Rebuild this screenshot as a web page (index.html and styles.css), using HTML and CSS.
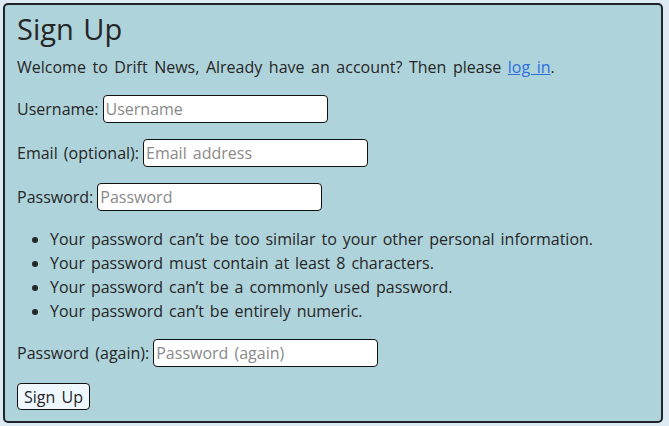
FILE: index.html
```html
<!DOCTYPE html>
<html lang="en">
<head>
<meta charset="utf-8">
<title>Sign Up</title>
<link rel="stylesheet" href="styles.css">
</head>
<body>
<main class="card">
  <h1 class="title">Sign Up</h1>
  <p class="intro">Welcome to Drift News, Already have an account? Then please <a href="#" class="link">log in</a>.</p>
  <form class="form">
    <p class="row"><label class="label" for="u">Username:</label> <input class="input" id="u" type="text" placeholder="Username"></p>
    <p class="row"><label class="label" for="e">Email (optional):</label> <input class="input" id="e" type="email" placeholder="Email address"></p>
    <p class="row"><label class="label" for="p1">Password:</label> <input class="input" id="p1" type="password" placeholder="Password"></p>
    <ul class="help">
      <li>Your password can’t be too similar to your other personal information.</li>
      <li>Your password must contain at least 8 characters.</li>
      <li>Your password can’t be a commonly used password.</li>
      <li>Your password can’t be entirely numeric.</li>
    </ul>
    <p class="row"><label class="label" for="p2">Password (again):</label> <input class="input" id="p2" type="password" placeholder="Password (again)"></p>
    <button class="btn" type="submit">Sign Up</button>
  </form>
</main>
</body>
</html>
```
FILE: styles.css
```css
html, body {
  margin: 0;
  padding: 0;
  background: #dde9f3;
}
body {
  padding: 3px 6px 3px 3px;
  font-family: "Open Sans", Lato, sans-serif;
  color: #262626;
  font-size: 16px;
  word-spacing: 2px;
}
.card {
  background: #aed3db;
  border: 2px solid #1d2328;
  border-radius: 5px;
  padding: 0 12px 11px 12px;
  height: 420px;
  box-sizing: border-box;
}
.title {
  font-size: 29px;
  font-weight: 400;
  line-height: 36px;
  margin: 6px 0 8px;
  word-spacing: 2px;
}
.intro {
  margin: 0 0 16px;
  line-height: 24px;
  word-spacing: 2.4px;
}
.link {
  color: #2f6fe0;
}
.form {
  margin: 0;
}
.row {
  margin: 0 0 16px;
  display: flex;
  align-items: center;
  gap: 4px;
  height: 28px;
}
.input {
  width: 225px;
  height: 28px;
  box-sizing: border-box;
  border: 1px solid #111;
  border-radius: 4px;
  background: #fff;
  font-family: inherit;
  font-size: 16px;
  padding: 0 2px;
  color: #262626;
  word-spacing: 2px;
}
.input::placeholder {
  color: #8a8a8a;
}
.help {
  margin: 0 0 16px;
  padding-left: 33px;
  line-height: 24px;
  word-spacing: 1.8px;
}
.btn {
  font-family: inherit;
  font-size: 16px;
  word-spacing: 2px;
  color: #262626;
  background: #f0f8ff;
  border: 1px solid #111;
  border-radius: 4px;
  height: 27px;
  padding: 0 6px;
}
```
